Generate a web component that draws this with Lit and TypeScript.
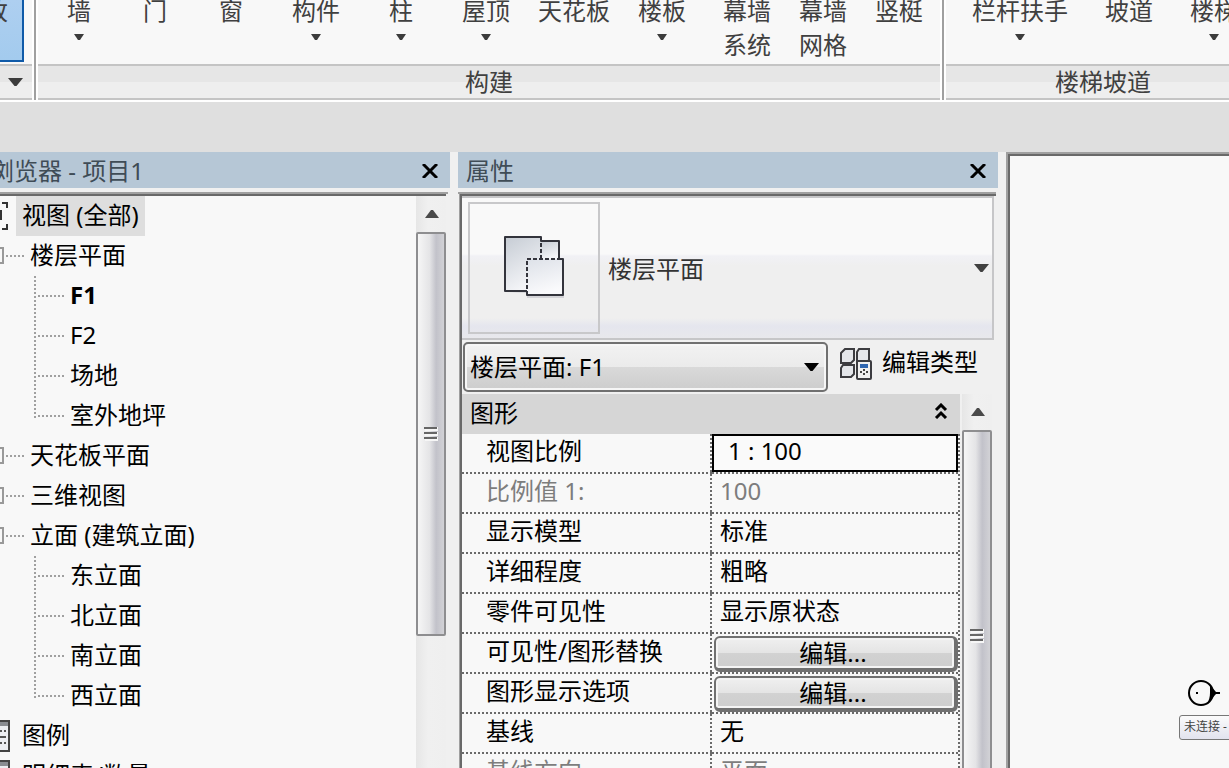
import { LitElement, html, css, nothing } from "lit";
import { customElement, property } from "lit/decorators.js";
import { classMap } from "lit/directives/class-map.js";

interface Command {
  name: string;
  second?: string;
  menu?: boolean;
  spaced?: boolean;
}

interface TreeNode {
  label: string;
  children?: string[];
}

interface Row {
  label: string;
  value: string;
  kind?: "input" | "button" | "disabled";
}

const BUILD: Command[] = [
  { name: "墙", menu: true },
  { name: "门" },
  { name: "窗" },
  { name: "构件", menu: true, spaced: true },
  { name: "柱", menu: true, spaced: true },
  { name: "屋顶", menu: true, spaced: true },
  { name: "天花板" },
  { name: "楼板", menu: true },
  { name: "幕墙", second: "系统", spaced: true },
  { name: "幕墙", second: "网格" },
  { name: "竖梃" },
];

const STAIRS: Command[] = [
  { name: "栏杆扶手", menu: true },
  { name: "坡道", spaced: true },
  { name: "楼梯", menu: true, spaced: true },
];

const VIEWS: TreeNode[] = [
  { label: "楼层平面", children: ["F1", "F2", "场地", "室外地坪"] },
  { label: "天花板平面" },
  { label: "三维视图" },
  { label: "立面 (建筑立面)", children: ["东立面", "北立面", "南立面", "西立面"] },
];

const ROWS: Row[] = [
  { label: "视图比例", value: "1 : 100", kind: "input" },
  { label: "比例值 1:", value: "100", kind: "disabled" },
  { label: "显示模型", value: "标准" },
  { label: "详细程度", value: "粗略" },
  { label: "零件可见性", value: "显示原状态" },
  { label: "可见性/图形替换", value: "编辑...", kind: "button" },
  { label: "图形显示选项", value: "编辑...", kind: "button" },
  { label: "基线", value: "无" },
  { label: "基线方向", value: "平面", kind: "disabled" },
];

const base = css`
  * {
    box-sizing: border-box;
  }
  button,
  input,
  select {
    font: inherit;
    color: inherit;
    margin: 0;
    padding: 0;
    border: 0;
    background: none;
    border-radius: 0;
  }
  svg {
    display: block;
    flex: none;
  }
`;

const caret = (w: number, h: number, color = "#3c3c3c") => html`
  <svg width=${w} height=${h} viewBox="0 0 ${w} ${h}" aria-hidden="true">
    <path d="M0 0H${w}L${w / 2 + 1} ${h}H${w / 2 - 1}Z" fill=${color} />
  </svg>
`;

@customElement("ribbon-bar")
class RibbonBar extends LitElement {
  static styles = [
    base,
    css`
      :host {
        display: flex;
        overflow: hidden;
        background: #fff;
        color: #404040;
        padding-bottom: 2px;
      }
      .panel {
        flex: none;
        display: flex;
        flex-direction: column;
        background: #f8f8f8;
      }
      .select {
        width: 32px;
        overflow: hidden;
      }
      .select .commands {
        justify-content: flex-end;
        padding: 0 8px 0 0;
      }
      .rule {
        flex: none;
        width: 6px;
        border: solid #fff;
        border-width: 0 2px;
        background: #a0a0a0;
      }
      .commands {
        display: flex;
        height: 64px;
        padding: 0 3px;
      }
      .stairs .commands {
        padding: 0 8px 0 12px;
      }
      .command {
        flex: none;
        display: flex;
        flex-direction: column;
        align-items: center;
        min-width: 76px;
        padding: 0 14px;
        line-height: 22px;
        white-space: nowrap;
      }
      .command svg {
        margin-top: 12px;
      }
      .second {
        margin-top: 12px;
      }
      .spaced {
        margin-left: 9px;
      }
      .active {
        height: 62px;
        background: linear-gradient(#aecff0, #a3cbee);
        border: 2px solid #0f5aa8;
        border-top: 0;
      }
      .title {
        display: flex;
        align-items: center;
        justify-content: center;
        height: 36px;
        border: solid #c4c4c4;
        border-width: 2px 0;
        background: linear-gradient(#e6e6e6 50%, #eeeeee 50%);
        line-height: 32px;
      }
      .select .title {
        justify-content: flex-end;
        padding-right: 9px;
      }
    `,
  ];

  private command(c: Command) {
    return html`<button
      type="button"
      class=${classMap({ command: true, spaced: !!c.spaced })}
    >
      <span>${c.name}</span>
      ${c.second ? html`<span class="second">${c.second}</span>` : nothing}
      ${c.menu ? caret(10, 6) : nothing}
    </button>`;
  }

  render() {
    return html`
      <section class="panel select">
        <div class="commands">
          <button type="button" class="command active">修改</button>
        </div>
        <div class="title">${caret(15, 8)}</div>
      </section>
      <div class="rule"></div>
      <section class="panel">
        <div class="commands">${BUILD.map((c) => this.command(c))}</div>
        <div class="title">构建</div>
      </section>
      <div class="rule"></div>
      <section class="panel stairs">
        <div class="commands">${STAIRS.map((c) => this.command(c))}</div>
        <div class="title">楼梯坡道</div>
      </section>
    `;
  }
}

@customElement("scroll-track")
class ScrollTrack extends LitElement {
  @property({ type: Boolean, reflect: true }) long = false;

  static styles = [
    base,
    css`
      :host {
        flex: none;
        display: flex;
        flex-direction: column;
        width: 30px;
        background: linear-gradient(90deg, #e6e6e6, #f0f0f0 40%, #efefef);
      }
      .up {
        flex: none;
        display: grid;
        place-items: center;
        height: 36px;
        padding-left: 2px;
      }
      .thumb {
        flex: none;
        display: grid;
        place-items: center;
        height: 404px;
        border: 2px solid #8e8e90;
        border-radius: 2px;
        background: linear-gradient(90deg, #f6f6f6, #e4e4e6 45%, #c2c2ca 70%, #d2d2d6);
      }
      :host([long]) .thumb {
        height: 412px;
      }
    `,
  ];

  render() {
    return html`
      <button type="button" class="up" aria-label="向上滚动">
        <svg width="14" height="8" viewBox="0 0 14 8">
          <path d="M6 0H8L14 8H0Z" fill="#4a4a4a" />
        </svg>
      </button>
      <div class="thumb">
        <svg width="14" height="14" viewBox="0 0 14 14">
          <path d="M1 2H14M1 7H14M1 12H14" stroke="#f6f6f6" stroke-width="4" />
          <path d="M0 1H13M0 6H13M0 11H13" stroke="#666" stroke-width="2" />
        </svg>
      </div>
    `;
  }
}

@customElement("dock-pane")
class DockPane extends LitElement {
  @property() heading = "";
  @property({ type: Boolean, reflect: true }) clipped = false;

  static styles = [
    base,
    css`
      :host {
        display: flex;
        flex-direction: column;
        min-height: 0;
        overflow: hidden;
      }
      .title {
        flex: none;
        display: flex;
        align-items: center;
        height: 36px;
        padding: 2px 12px 0 8px;
        background: #b6c7d6;
        color: #3f4c56;
        line-height: 34px;
      }
      :host([clipped]) .title {
        padding-left: 0;
      }
      .name {
        flex: 1;
        margin: 0;
        font-size: inherit;
        font-weight: 400;
        white-space: nowrap;
      }
      :host([clipped]) .name {
        text-indent: -58px;
      }
      .body {
        flex: 1;
        min-height: 0;
        display: flex;
        flex-direction: column;
        margin: 4px 2px 0 0;
        border-top: 2px solid #a0a0a0;
      }
    `,
  ];

  render() {
    return html`
      <header class="title">
        <h2 class="name">${this.heading}</h2>
        <button type="button" aria-label="关闭">
          <svg width="16" height="14" viewBox="0 0 16 14">
            <path d="M1 0L15 14M15 0L1 14" stroke="#000" stroke-width="3" />
          </svg>
        </button>
      </header>
      <div class="body"><slot></slot></div>
    `;
  }
}

@customElement("project-tree")
class ProjectTree extends LitElement {
  static styles = [
    base,
    css`
      :host {
        flex: 1;
        min-height: 0;
        display: flex;
        margin-right: 2px;
        border-top: 2px solid #696969;
        background: #f8f8f8;
        color: #000;
      }
      .tree {
        flex: 1;
        overflow: hidden;
      }
      ul {
        margin: 0;
        padding: 0;
        list-style: none;
      }
      .row {
        display: flex;
        align-items: center;
        height: 40px;
        line-height: 38px;
        white-space: nowrap;
      }
      .text {
        height: 40px;
      }
      .root svg {
        margin-right: 6px;
      }
      .root .picked {
        margin-left: -6px;
        padding: 0 6px;
        background: #dedede;
      }
      .branch svg {
        margin-right: 6px;
      }
      .leaves {
        margin-left: 34px;
        background: repeating-linear-gradient(#a0a0a0 0 2px, transparent 2px 4px) 0 0 / 2px
          calc(100% - 18px) no-repeat;
      }
      .leaf::before {
        content: "";
        width: 26px;
        height: 2px;
        margin: 0 6px 0 4px;
        background: repeating-linear-gradient(90deg, #a0a0a0 0 2px, transparent 2px 4px);
      }
      .current {
        font-weight: 700;
      }
    `,
  ];

  render() {
    return html`
      <div class="tree">
        <div class="row root">
          <svg width="16" height="28" viewBox="0 0 16 28">
            <path d="M2 1H7V6M7 22V27H2" fill="none" stroke="#333" stroke-width="2" />
            <path d="M0 8H2V18H0Z" fill="#333" />
          </svg>
          <span class="text picked">视图 (全部)</span>
        </div>
        <ul>
          ${VIEWS.map(
            (n) => html`<li>
              <div class="row branch">
                <svg width="24" height="18" viewBox="0 0 24 18">
                  <path d="M0 1H3V16H0" fill="none" stroke="#999" stroke-width="2" />
                  <path d="M6 9H24" stroke="#a0a0a0" stroke-width="2" stroke-dasharray="2 2" />
                </svg>
                <span class="text">${n.label}</span>
              </div>
              ${n.children
                ? html`<ul class="leaves">
                    ${n.children.map(
                      (leaf) => html`<li
                        class=${classMap({ row: true, leaf: true, current: leaf === "F1" })}
                      >
                        <span class="text">${leaf}</span>
                      </li>`
                    )}
                  </ul>`
                : nothing}
            </li>`
          )}
        </ul>
        ${["图例", "明细表/数量"].map(
          (label) => html`<div class="row root">
            <svg width="16" height="32" viewBox="0 0 16 32">
              <path d="M-6 1H9V31H-6Z" fill="#eceef2" stroke="#444" stroke-width="2" />
              <path d="M0 4H8" stroke="#8a8d92" stroke-width="4" />
              <path d="M0 11H6M0 23H6" stroke="#555" stroke-width="2" stroke-dasharray="2 2" />
              <path d="M0 17H6" stroke="#555" stroke-width="2" />
            </svg>
            <span class="text">${label}</span>
          </div>`
        )}
      </div>
      <scroll-track></scroll-track>
    `;
  }
}

@customElement("property-sheet")
class PropertySheet extends LitElement {
  static styles = [
    base,
    css`
      :host {
        flex: 1;
        min-height: 0;
        display: flex;
        flex-direction: column;
        margin-left: 1px;
        border-left: 1px solid #a0a0a0;
        background: #f0f0f0;
        color: #000;
      }
      .sheet {
        flex: 1;
        min-height: 0;
        display: flex;
        flex-direction: column;
        border: solid #696969;
        border-width: 2px 0 0 2px;
        padding-right: 2px;
      }
      .type {
        flex: none;
        display: flex;
        align-items: center;
        gap: 8px;
        height: 144px;
        padding: 4px 3px 4px 6px;
        border: solid #c6c6c8;
        border-width: 2px 2px 2px 0;
        background: linear-gradient(
          #f9f9f9 56px,
          #f1f1f5 58px,
          #efefef 68px,
          #efefef 120px,
          #e5e6ee 128px,
          #e8e8ec
        );
        color: #333;
        text-align: left;
      }
      .preview {
        display: grid;
        place-items: center;
        width: 132px;
        height: 132px;
        padding-bottom: 4px;
        border: 2px solid #c8c8ca;
      }
      .family {
        flex: 1;
        padding-bottom: 2px;
      }
      .instance {
        flex: none;
        display: flex;
        align-items: flex-start;
        gap: 12px;
        padding: 2px 16px 2px 1px;
      }
      .combo {
        flex: 1;
        display: grid;
        align-items: center;
      }
      .combo select,
      .combo svg {
        grid-area: 1 / 1;
      }
      .combo select {
        appearance: none;
        width: 100%;
        height: 50px;
        padding: 0 40px 2px 5px;
        border: 2px solid #707070;
        border-radius: 5px;
        box-shadow: inset 0 0 0 2px #f6f6f6;
        background: linear-gradient(#f2f2f2, #ebebeb 50%, #d9d9d9 50%, #cdcdcd);
      }
      .combo svg {
        justify-self: end;
        margin-right: 9px;
        pointer-events: none;
      }
      .edit {
        display: flex;
        align-items: center;
        gap: 10px;
        height: 44px;
        line-height: 40px;
        white-space: nowrap;
      }
      .edit span {
        height: 44px;
      }
      .scroll {
        flex: 1;
        min-height: 0;
        display: flex;
        gap: 2px;
        padding-right: 2px;
        overflow: hidden;
      }
      .list {
        flex: 1;
        background: #f8f8f8;
      }
      .group {
        display: flex;
        align-items: center;
        justify-content: space-between;
        width: 100%;
        height: 40px;
        padding: 0 12px 6px 8px;
        background: #d6d6d6;
      }
      table {
        width: 100%;
        border-collapse: collapse;
        table-layout: fixed;
      }
      th,
      td {
        height: 40px;
        padding: 0 2px 6px 24px;
        font-weight: 400;
        text-align: left;
        line-height: 34px;
        white-space: nowrap;
        background:
          repeating-linear-gradient(90deg, #6a6a6a 0 2px, transparent 2px 4px) 0 100% / 100% 2px
            no-repeat,
          repeating-linear-gradient(#6a6a6a 0 2px, transparent 2px 4px) 100% 0 / 2px 100%
            no-repeat;
      }
      td {
        padding-left: 8px;
      }
      .disabled {
        color: #7d7d7d;
      }
      .field {
        padding: 0 2px 2px 0;
      }
      .field input {
        display: block;
        width: 100%;
        height: 38px;
        padding: 0 14px 6px;
        border: 2px solid #000;
        background: #fafafa;
      }
      .action {
        padding: 2px;
      }
      .action button {
        display: block;
        width: 100%;
        height: 36px;
        padding-right: 4px;
        border: solid #707070;
        border-width: 2px 4px 4px 2px;
        border-radius: 6px;
        box-shadow: inset 0 0 0 2px #f4f4f4;
        background: linear-gradient(#f0f0f0, #e4e4e4 50%, #d2d2d2 50%, #cdcdcd);
        line-height: 30px;
        text-align: center;
      }
    `,
  ];

  private row(r: Row, i: number) {
    const id = `prop-${i}`;
    if (r.kind === "input")
      return html`<tr>
        <th scope="row"><label for=${id}>${r.label}</label></th>
        <td class="field"><input id=${id} type="text" .value=${r.value} /></td>
      </tr>`;
    if (r.kind === "button")
      return html`<tr>
        <th scope="row" id=${id}>${r.label}</th>
        <td class="action"><button type="button" aria-describedby=${id}>${r.value}</button></td>
      </tr>`;
    return html`<tr class=${classMap({ disabled: r.kind === "disabled" })}>
      <th scope="row">${r.label}</th>
      <td>${r.value}</td>
    </tr>`;
  }

  render() {
    return html`
      <div class="sheet">
        <button type="button" class="type">
          <span class="preview">
            <svg width="64" height="64" viewBox="0 0 64 64">
              <defs>
                <linearGradient id="slab" x1="0" y1="0" x2="0.4" y2="1">
                  <stop offset="0" stop-color="#c6ccd4" />
                  <stop offset="1" stop-color="#f4f5f8" />
                </linearGradient>
                <linearGradient id="front" x1="0" y1="0" x2="0.3" y2="1">
                  <stop offset="0" stop-color="#dde1e8" />
                  <stop offset="1" stop-color="#fafafc" />
                </linearGradient>
              </defs>
              <path d="M5 58H25V64H62V61Z" fill="#d4d4d8" />
              <path d="M39 7H57V25H39Z" fill="url(#slab)" />
              <path d="M3 3H39V25H25V57H3Z" fill="url(#slab)" />
              <path d="M25 25H61V61H25Z" fill="url(#front)" />
              <g fill="none" stroke="#33343c" stroke-width="2">
                <path d="M25 57H3V3H39V7H57V25H61V61H25V57" stroke-linejoin="round" />
                <path d="M39 9V25M25 27V57M25 25H57" stroke-dasharray="4 2" />
              </g>
            </svg>
          </span>
          <span class="family">楼层平面</span>
          ${caret(15, 8, "#404040")}
        </button>
        <div class="instance">
          <div class="combo">
            <select aria-label="实例">
              <option>楼层平面: F1</option>
            </select>
            ${caret(15, 8, "#000")}
          </div>
          <button type="button" class="edit">
            <svg width="32" height="32" viewBox="0 0 32 32">
              <g fill="#e4e6ea" stroke="#3c3c40" stroke-width="2">
                <path d="M1 5L5 1H14V12L11 15H1Z" />
                <path d="M17 4L19 1H29V12L26 15H17Z" />
                <path d="M1 20L3 17H14V26L11 29H1Z" />
                <rect x="17" y="13" width="14" height="18" rx="1" fill="#f0f0f0" />
              </g>
              <path d="M20 16H28V20H20Z" fill="#2f66b0" />
              <path d="M20 24H22M26 24H28M23 22H25M23 26H25" stroke="#444" stroke-width="2" />
            </svg>
            <span>编辑类型</span>
          </button>
        </div>
        <div class="scroll">
          <div class="list">
            <button type="button" class="group">
              <span>图形</span>
              <svg width="14" height="16" viewBox="0 0 14 16">
                <path
                  d="M2 7L7 2L12 7M2 15L7 10L12 15"
                  fill="none"
                  stroke="#000"
                  stroke-width="3"
                />
              </svg>
            </button>
            <table>
              <colgroup>
                <col />
                <col width="248" />
              </colgroup>
              <tbody>
                ${ROWS.map((r, i) => this.row(r, i))}
              </tbody>
            </table>
          </div>
          <scroll-track long></scroll-track>
        </div>
      </div>
    `;
  }
}

@customElement("drawing-view")
class DrawingView extends LitElement {
  static styles = [
    base,
    css`
      :host {
        position: relative;
        display: block;
        overflow: hidden;
        background: #f8f8f8;
        border: solid #a0a0a0;
        border-width: 2px 0 0 2px;
      }
      .canvas {
        height: 100%;
        border: solid #696969;
        border-width: 2px 0 0 2px;
      }
      .marker {
        position: absolute;
        left: 179px;
        top: 525px;
      }
      .status {
        position: absolute;
        left: 171px;
        top: 561px;
        width: 96px;
        padding: 0 4px 2px;
        border: 1px solid #777;
        border-radius: 3px;
        background: linear-gradient(#fbfbfb, #e2e3ee);
        color: #444;
        font-size: 12px;
        line-height: 21px;
        white-space: nowrap;
      }
    `,
  ];

  render() {
    return html`
      <div class="canvas"></div>
      <svg class="marker" width="34" height="28" viewBox="0 0 34 28">
        <circle cx="14" cy="14" r="12" fill="none" stroke="#000" stroke-width="2" />
        <path d="M23 6L29 13H33V15H29L20 25C22 21 23 18 23 14Z" fill="#000" />
        <rect x="9" y="13" width="2" height="2" />
      </svg>
      <div class="status">未连接 -</div>
    `;
  }
}

@customElement("app-root")
class AppRoot extends LitElement {
  static styles = [
    base,
    css`
      :host {
        display: flex;
        flex-direction: column;
        height: 100vh;
        overflow: hidden;
        background: #dfdfdf;
        font-family: "Noto Sans", "Noto Sans CJK SC", sans-serif;
        font-size: 24px;
      }
      ribbon-bar {
        flex: none;
      }
      .workspace {
        flex: 1;
        min-height: 0;
        display: grid;
        grid-template-columns: 450px 540px minmax(0, 1fr);
        grid-template-rows: minmax(0, 1fr);
        gap: 8px;
        margin-top: 50px;
        background: #f0f0f0;
      }
    `,
  ];

  render() {
    return html`
      <ribbon-bar></ribbon-bar>
      <main class="workspace">
        <dock-pane heading="项目浏览器 - 项目1" clipped>
          <project-tree></project-tree>
        </dock-pane>
        <dock-pane heading="属性">
          <property-sheet></property-sheet>
        </dock-pane>
        <drawing-view></drawing-view>
      </main>
    `;
  }
}
